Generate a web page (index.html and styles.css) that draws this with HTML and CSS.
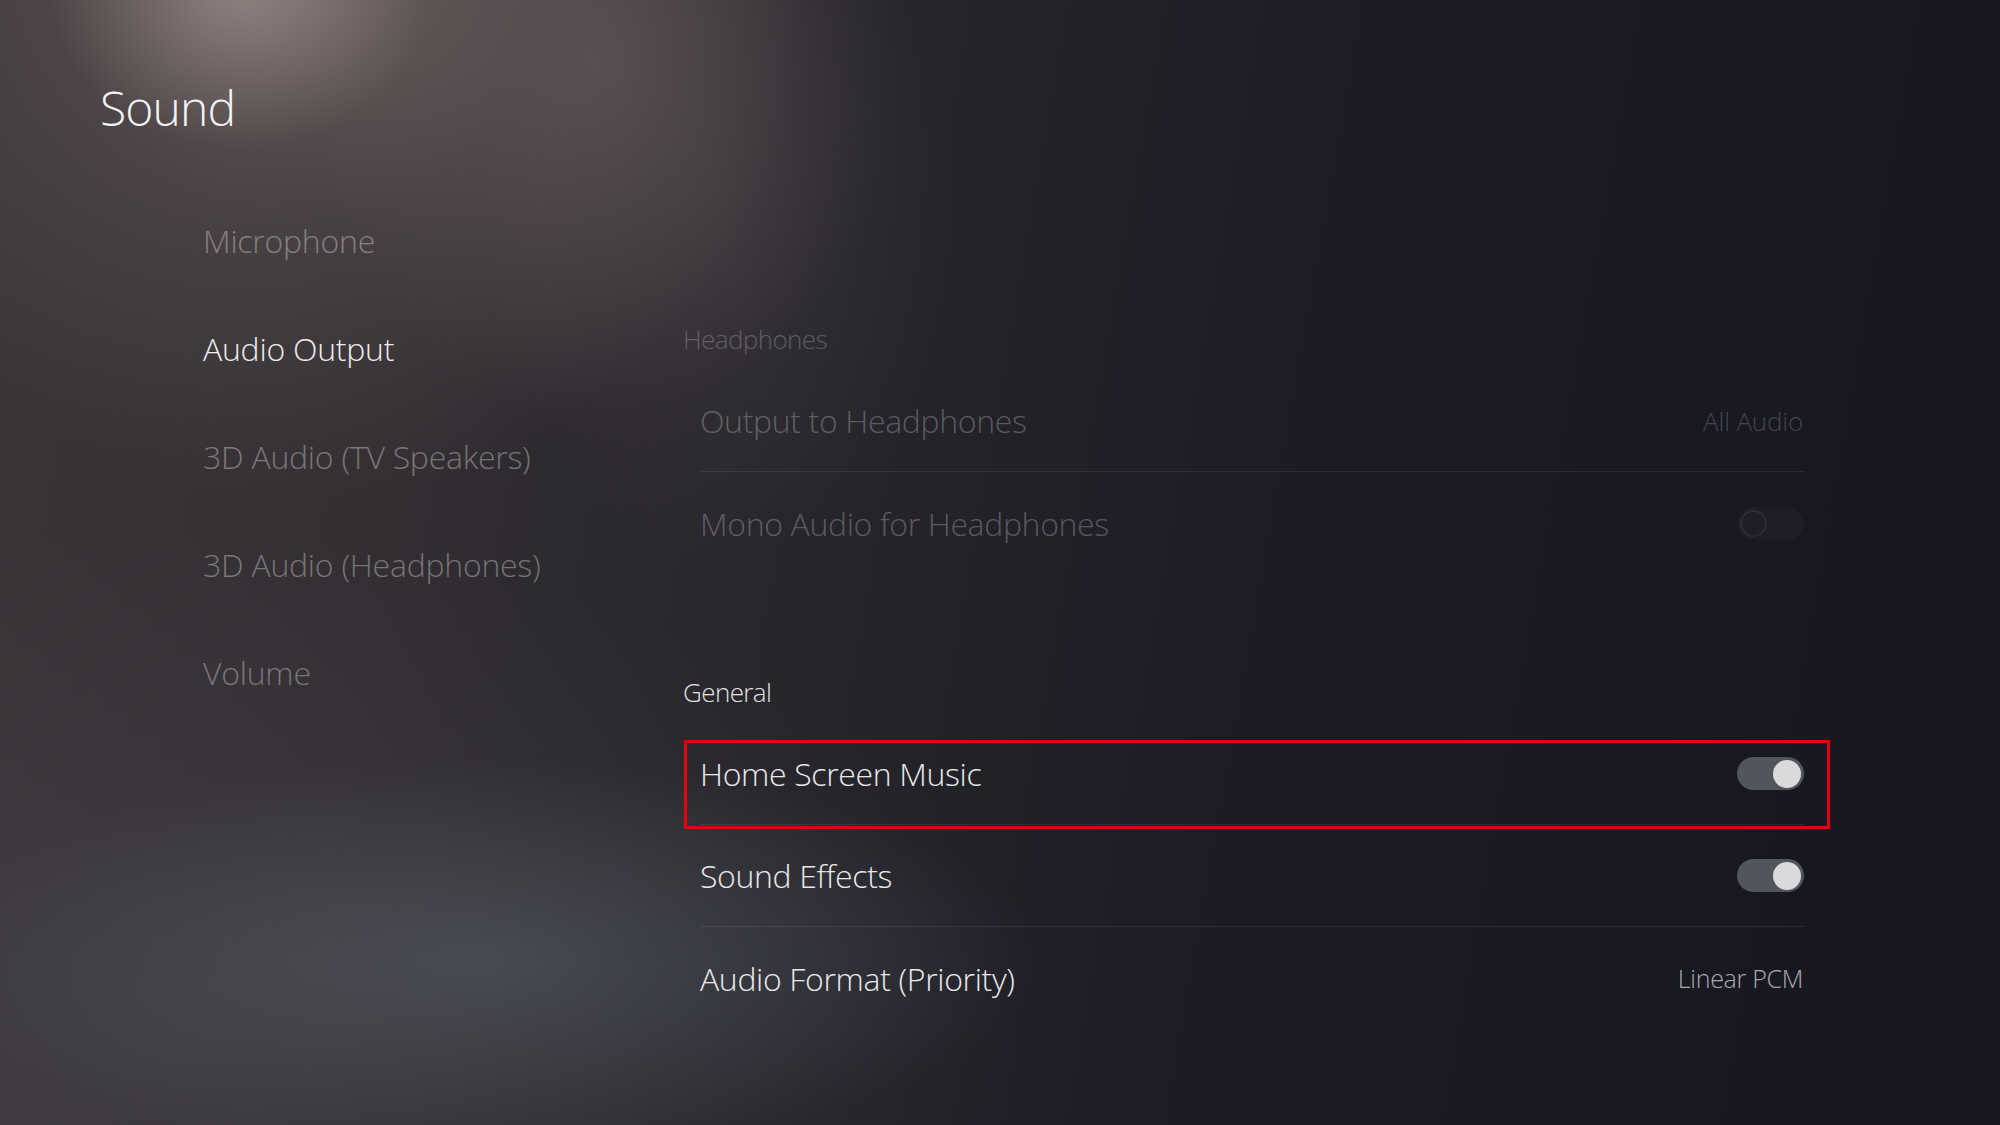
FILE: index.html
```html
<!DOCTYPE html>
<html lang="en">
<head>
<meta charset="utf-8">
<title>Sound</title>
<link rel="stylesheet" href="styles.css">
</head>
<body>
<div class="screen">
  <h1 class="title">Sound</h1>
  <div class="main">
    <nav class="menu">
      <div class="menu-item">Microphone</div>
      <div class="menu-item active">Audio Output</div>
      <div class="menu-item">3D Audio (TV Speakers)</div>
      <div class="menu-item">3D Audio (Headphones)</div>
      <div class="menu-item">Volume</div>
    </nav>
    <section class="panel">
      <div class="group">
        <div class="group-title dim">Headphones</div>
        <div class="row disabled divided">
          <span class="label">Output to Headphones</span>
          <span class="value">All Audio</span>
        </div>
        <div class="row disabled">
          <span class="label">Mono Audio for Headphones</span>
          <span class="toggle off"></span>
        </div>
      </div>
      <div class="group general">
        <div class="group-title">General</div>
        <div class="row focused divided">
          <span class="label">Home Screen Music</span>
          <span class="toggle on"></span>
        </div>
        <div class="row divided">
          <span class="label">Sound Effects</span>
          <span class="toggle on"></span>
        </div>
        <div class="row">
          <span class="label">Audio Format (Priority)</span>
          <span class="value">Linear PCM</span>
        </div>
      </div>
    </section>
  </div>
</div>
</body>
</html>
```
FILE: styles.css
```css
html, body {
  margin: 0;
  padding: 0;
}

body {
  width: 2000px;
  height: 1125px;
  overflow: hidden;
  font-family: "Open Sans", "Noto Sans", sans-serif;
  font-weight: 300;
  color: #eaeaea;
  background:
    radial-gradient(ellipse 190px 160px at 240px -10px, rgba(200, 180, 175, 0.45), rgba(200, 180, 175, 0) 100%),
    radial-gradient(ellipse 520px 560px at 300px -60px, rgba(150, 132, 128, 0.55), rgba(150, 132, 128, 0.2) 50%, rgba(150, 132, 128, 0) 100%),
    radial-gradient(ellipse 300px 360px at 600px 60px, rgba(140, 124, 122, 0.28), rgba(140, 124, 122, 0) 100%),
    radial-gradient(ellipse 240px 360px at 720px 200px, rgba(120, 108, 108, 0.16), rgba(120, 108, 108, 0) 100%),
    radial-gradient(ellipse 560px 200px at 480px 960px, rgba(100, 108, 118, 0.42), rgba(100, 108, 118, 0) 100%),
    radial-gradient(ellipse 900px 520px at 150px 1050px, rgba(80, 80, 88, 0.35), rgba(80, 80, 88, 0) 100%),
    linear-gradient(100deg, #3a3538 0%, #322e32 22%, #26252b 42%, #1c1c24 62%, #15161e 100%);
}

.screen {
  width: 2000px;
  height: 1125px;
}

.title {
  margin: 0;
  padding: 78px 0 0 100px;
  font-size: 48px;
  line-height: 60px;
  font-weight: 300;
  letter-spacing: -0.9px;
  color: #f3f3f3;
}

.main {
  display: flex;
  align-items: flex-start;
}

.menu {
  margin: 48px 0 0 203px;
  width: 480px;
  display: flex;
  flex-direction: column;
}

.menu-item {
  height: 108px;
  display: flex;
  align-items: center;
  font-size: 32px;
  letter-spacing: -0.25px;
  color: rgba(255, 255, 255, 0.34);
}

.menu-item.active {
  color: #ececec;
}

.panel {
  margin-top: 183px;
  width: 1122px;
}

.group-title {
  font-size: 26px;
  line-height: 36px;
  letter-spacing: -0.6px;
  color: #e2e2e2;
  margin-bottom: 13px;
}

.group-title.dim {
  color: rgba(255, 255, 255, 0.24);
}

.general {
  margin-top: 100px;
}

.row {
  position: relative;
  margin-left: 17px;
  height: 102px;
  box-sizing: border-box;
  display: flex;
  align-items: center;
  justify-content: space-between;
  font-size: 32px;
  letter-spacing: -0.35px;
  color: #e9e9e9;
}

.row.divided {
  border-bottom: 1px solid rgba(255, 255, 255, 0.08);
}

.row.disabled .label {
  color: rgba(255, 255, 255, 0.26);
}

.value {
  font-size: 25px;
  letter-spacing: -0.3px;
  color: rgba(255, 255, 255, 0.64);
  margin-right: 2px;
}

.row.disabled .value {
  font-size: 26px;
  letter-spacing: -0.2px;
  color: rgba(255, 255, 255, 0.2);
}

.row.focused::after {
  content: "";
  position: absolute;
  left: -16px;
  right: -25px;
  top: 17px;
  bottom: -5px;
  border: 3px solid #e5000f;
  box-sizing: border-box;
  pointer-events: none;
}

.toggle {
  position: relative;
  width: 67px;
  height: 33px;
  border-radius: 17px;
  margin-right: 1px;
  flex: none;
}

.toggle.on {
  background: #53555d;
}

.toggle.on::after {
  content: "";
  position: absolute;
  top: 2.5px;
  right: 3px;
  width: 28px;
  height: 28px;
  border-radius: 50%;
  background: #dadadc;
}

.toggle.off {
  background: rgba(255, 255, 255, 0.025);
}

.toggle.off::after {
  content: "";
  position: absolute;
  top: 3px;
  left: 3px;
  width: 23px;
  height: 23px;
  border-radius: 50%;
  border: 2px solid rgba(255, 255, 255, 0.07);
}
```
